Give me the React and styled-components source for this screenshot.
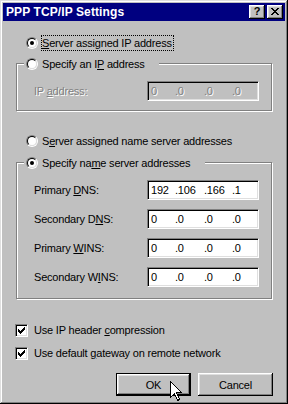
import React from 'react';
import styled, { createGlobalStyle } from 'styled-components';

const GlobalStyle = createGlobalStyle`
    html, body {
        margin: 0;
        padding: 0;
        background: #c0c0c0;
    }
    body {
        font-family: "Liberation Sans", Arial, sans-serif;
        font-size: 11px;
        letter-spacing: -0.2px;
        color: #000;
    }
`;

const Window = styled.div`
    box-sizing: border-box;
    width: 288px;
    height: 404px;
    padding: 3px;
    background: #c0c0c0;
    box-shadow: inset -1px -1px #000, inset 1px 1px #dfdfdf,
        inset -2px -2px #808080, inset 2px 2px #fff;
    display: flex;
    flex-direction: column;
`;

const TitleBar = styled.div`
    height: 18px;
    background: #000080;
    display: flex;
    align-items: center;
    padding: 0 2px 0 3px;
`;

const Title = styled.span`
    color: #fff;
    font-weight: bold;
    font-size: 12px;
    letter-spacing: 0.1px;
`;

const TitleButtons = styled.div`
    margin-left: auto;
    display: flex;
    gap: 2px;
`;

const TitleButton = styled.div`
    box-sizing: border-box;
    width: 16px;
    height: 14px;
    background: #c0c0c0;
    box-shadow: inset -1px -1px #000, inset 1px 1px #fff,
        inset -2px -2px #808080, inset 2px 2px #dfdfdf;
    display: flex;
    align-items: center;
    justify-content: center;
    font-weight: bold;
    font-size: 11px;
    line-height: 11px;
    padding-bottom: 1px;
`;

const Body = styled.div`
    flex: 1;
    display: flex;
    flex-direction: column;
    padding-top: 14px;
`;

const OptionRow = styled.div`
    display: flex;
    align-items: center;
    height: 16px;
    margin: ${p => p.$top || 0}px 0 0 23px;
`;

const Legend = styled.div`
    display: flex;
    align-items: center;
    align-self: flex-start;
    height: 16px;
    margin: -8px 0 0 7px;
    padding: 0 ${p => p.$right}px 0 2px;
    background: #c0c0c0;
`;

const RadioOuter = styled.span`
    box-sizing: border-box;
    width: 12px;
    height: 12px;
    border-radius: 50%;
    border: 1px solid;
    border-color: #808080 #fff #fff #808080;
    flex: none;
`;

const RadioInner = styled.span`
    box-sizing: border-box;
    display: flex;
    align-items: center;
    justify-content: center;
    width: 10px;
    height: 10px;
    border-radius: 50%;
    border: 1px solid;
    border-color: #000 #dfdfdf #dfdfdf #000;
    background: #fff;
`;

const RadioDot = styled.span`
    width: 4px;
    height: 4px;
    border-radius: 50%;
    background: #000;
`;

const OptionText = styled.span`
    margin-left: 3px;
    padding: 0 1px 0 0;
    line-height: 14px;
    border: 1px dotted ${p => (p.$focus ? '#000' : 'transparent')};
    white-space: nowrap;
`;

const Group = styled.div`
    box-sizing: border-box;
    display: flex;
    flex-direction: column;
    width: 256px;
    margin: ${p => p.$top}px 0 0 13px;
    padding-bottom: ${p => p.$bottom}px;
    border: 1px solid #808080;
    box-shadow: inset 1px 1px #fff, 1px 1px #fff;
`;

const FieldRow = styled.div`
    display: flex;
    align-items: center;
    margin-top: 9px;
    padding-left: 17px;
`;

const FieldLabel = styled.span`
    width: 113px;
    white-space: nowrap;
    color: ${p => (p.$disabled ? '#808080' : '#000')};
    text-shadow: ${p => (p.$disabled ? '1px 1px #fff' : 'none')};
`;

const IpField = styled.div`
    box-sizing: border-box;
    width: 112px;
    height: 20px;
    padding-left: 3px;
    display: grid;
    grid-template-columns: 24px 29px 28px 1fr;
    align-items: center;
    background: ${p => (p.$disabled ? '#c0c0c0' : '#fff')};
    color: ${p => (p.$disabled ? '#808080' : '#000')};
    text-shadow: ${p => (p.$disabled ? '1px 1px #fff' : 'none')};
    border: 1px solid;
    border-color: #808080 #fff #fff #808080;
    box-shadow: inset 1px 1px #000, inset -1px -1px #dfdfdf;
`;

const CheckRow = styled.div`
    display: flex;
    align-items: center;
    height: 16px;
    margin: ${p => p.$top}px 0 0 12px;
    gap: 6px;
    white-space: nowrap;
`;

const CheckBox = styled.span`
    box-sizing: border-box;
    width: 13px;
    height: 13px;
    display: flex;
    align-items: center;
    justify-content: center;
    background: #fff;
    border: 1px solid;
    border-color: #808080 #fff #fff #808080;
    box-shadow: inset 1px 1px #000, inset -1px -1px #dfdfdf;
`;

const ButtonRow = styled.div`
    display: flex;
    justify-content: flex-end;
    gap: 7px;
    margin-top: 12px;
    padding-right: 12px;
`;

const Button = styled.div`
    position: relative;
    box-sizing: border-box;
    width: 75px;
    height: 23px;
    display: flex;
    align-items: center;
    justify-content: center;
    background: #c0c0c0;
    border: ${p => (p.$default ? '1px solid #000' : 'none')};
    box-shadow: inset -1px -1px #000, inset 1px 1px #fff,
        inset -2px -2px #808080, inset 2px 2px #dfdfdf;
`;

const Cursor = styled.svg`
    position: absolute;
    left: 53px;
    top: 7px;
`;

const Key = styled.u`
    text-decoration: underline;
    text-underline-offset: 1px;
`;

const Radio = ({ checked }) => (
    <RadioOuter>
        <RadioInner>{checked && <RadioDot />}</RadioInner>
    </RadioOuter>
);

const Ip = ({ parts, disabled }) => (
    <IpField $disabled={disabled}>
        {parts.map((part, idx) => (
            <span key={idx}>{idx === 0 ? part : `.${part}`}</span>
        ))}
    </IpField>
);

const Check = () => (
    <CheckBox>
        <svg width="7" height="7" viewBox="0 0 7 7" shapeRendering="crispEdges">
            <path
                d="M6 0h1v3h-1v1h-1v1h-1v1h-1v1h-1v-1h-1v-1h-1v-3h1v1h1v1h1v-1h1v-1h1z"
                fill="#000"
            />
        </svg>
    </CheckBox>
);

const fields = [
    { label: ['Primary ', 'D', 'NS:'], parts: ['192', '106', '166', '1'] },
    { label: ['Secondary D', 'N', 'S:'], parts: ['0', '0', '0', '0'] },
    { label: ['Primary ', 'W', 'INS:'], parts: ['0', '0', '0', '0'] },
    { label: ['Secondary W', 'I', 'NS:'], parts: ['0', '0', '0', '0'] },
];

const App = () => (
    <>
        <GlobalStyle />
        <Window>
            <TitleBar>
                <Title>PPP TCP/IP Settings</Title>
                <TitleButtons>
                    <TitleButton>?</TitleButton>
                    <TitleButton>
                        <svg width="8" height="7" viewBox="0 0 8 7" shapeRendering="crispEdges">
                            <path
                                d="M0 0h2v1h1v1h2v-1h1v-1h2v1h-1v1h-1v1h-1v1h1v1h1v1h1v1h-2v-1h-1v-1h-2v1h-1v1h-2v-1h1v-1h1v-1h1v-1h-1v-1h-1v-1h-1z"
                                fill="#000"
                            />
                        </svg>
                    </TitleButton>
                </TitleButtons>
            </TitleBar>
            <Body>
                <OptionRow>
                    <Radio checked />
                    <OptionText $focus>
                        <Key>S</Key>erver assigned IP address
                    </OptionText>
                </OptionRow>

                <Group $top={12} $bottom={9}>
                    <Legend $right={12}>
                        <Radio />
                        <OptionText>
                            Specify an I<Key>P</Key> address
                        </OptionText>
                    </Legend>
                    <FieldRow>
                        <FieldLabel $disabled>
                            IP <Key>a</Key>ddress:
                        </FieldLabel>
                        <Ip parts={['0', '0', '0', '0']} disabled />
                    </FieldRow>
                </Group>

                <OptionRow $top={22}>
                    <Radio />
                    <OptionText>
                        S<Key>e</Key>rver assigned name server addresses
                    </OptionText>
                </OptionRow>

                <Group $top={13} $bottom={11}>
                    <Legend $right={13}>
                        <Radio checked />
                        <OptionText>
                            Specify na<Key>m</Key>e server addresses
                        </OptionText>
                    </Legend>
                    {fields.map((field, idx) => (
                        <FieldRow key={idx}>
                            <FieldLabel>
                                {field.label[0]}
                                <Key>{field.label[1]}</Key>
                                {field.label[2]}
                            </FieldLabel>
                            <Ip parts={field.parts} />
                        </FieldRow>
                    ))}
                </Group>

                <CheckRow $top={23}>
                    <Check />
                    <span>
                        Use IP header <Key>c</Key>ompression
                    </span>
                </CheckRow>
                <CheckRow $top={7}>
                    <Check />
                    <span>
                        Use default <Key>g</Key>ateway on remote network
                    </span>
                </CheckRow>

                <ButtonRow>
                    <Button $default>
                        OK
                        <Cursor width="12" height="20" viewBox="0 0 12 20" shapeRendering="crispEdges">
                            <path
                                d="M0.5 0.5 V16.5 L4.5 12.5 L7.5 19.5 L9.5 18.5 L6.5 11.5 H11.5 Z"
                                fill="#fff"
                                stroke="#000"
                                strokeWidth="1"
                            />
                        </Cursor>
                    </Button>
                    <Button>Cancel</Button>
                </ButtonRow>
            </Body>
        </Window>
    </>
);

export default App;
